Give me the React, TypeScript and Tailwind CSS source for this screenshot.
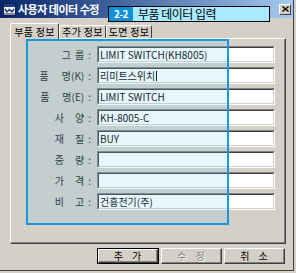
import React from 'react';

const KR = '"Noto Sans CJK KR", "Noto Sans", sans-serif';

type Row = { a: string; b: string; gap: number; value: string; caret?: boolean };

const rows: Row[] = [
  { a: '그', b: '룹', gap: 4, value: 'LIMIT SWITCH(KH8005)' },
  { a: '품', b: '명(K)', gap: 13, value: '리미트스위치', caret: true },
  { a: '품', b: '명(E)', gap: 13, value: 'LIMIT SWITCH' },
  { a: '사', b: '양', gap: 11, value: 'KH-8005-C' },
  { a: '재', b: '질', gap: 11, value: 'BUY' },
  { a: '중', b: '량', gap: 11, value: '' },
  { a: '가', b: '격', gap: 11, value: '' },
  { a: '비', b: '고', gap: 11, value: '건흥전기(주)' },
];

function TitleIcon() {
  return (
    <svg width="13" height="13" viewBox="0 0 13 13">
      <rect x="0.5" y="0.5" width="12" height="12" fill="#e8f0f8" stroke="#102050" />
      <rect x="1" y="1" width="11" height="3" fill="#1c3c80" />
      <path d="M2 6 L4 9 L6.5 6.5 L9 9 L11 6" fill="none" stroke="#203060" strokeWidth="1.4" />
      <rect x="1" y="10" width="11" height="2" fill="#8090a8" />
    </svg>
  );
}

function Field({ value, caret }: { value: string; caret?: boolean }) {
  return (
    <div className="w-[178px] h-[17px] border-t border-l border-t-[#808080] border-l-[#808080] border-b border-r border-b-white border-r-white">
      <div className="h-full border-t border-l border-t-[#404040] border-l-[#404040] border-b border-r border-b-[#d4d0c8] border-r-[#d4d0c8] bg-white flex items-center pl-[1px] text-[10px] text-black leading-none">
        {value}
        {caret && <span className="ml-[1px] w-px h-[10px] bg-black" />}
      </div>
    </div>
  );
}

function Btn({ a, b, primary, disabled }: { a: string; b: string; primary?: boolean; disabled?: boolean }) {
  return (
    <div className={primary ? 'w-[62px] h-[16px] border border-black' : 'w-[61px] h-[16px]'}>
      <div className="h-full border-t border-l border-t-white border-l-white border-b border-r border-b-[#404040] border-r-[#404040]">
        <div className="h-full border-b border-r border-b-[#808080] border-r-[#808080] flex items-center justify-center gap-[9px] text-[10px] leading-none">
          <span className={disabled ? 'text-[#808080] [text-shadow:1px_1px_0_#fff]' : 'text-black'}>{a}</span>
          <span className={disabled ? 'text-[#808080] [text-shadow:1px_1px_0_#fff]' : 'text-black'}>{b}</span>
        </div>
      </div>
    </div>
  );
}

export default function App() {
  return (
    <div className="relative w-[296px] h-[273px] overflow-hidden bg-[#d4d0c8]" style={{ fontFamily: KR }}>
      <div className="w-[294px] h-[271px] border-r border-b border-r-[#404040] border-b-[#404040] flex flex-col">
        {/* Title bar */}
        <div className="h-[18px] flex items-center bg-gradient-to-r from-[#0a246a] to-[#a6caf0] pl-[3px] pr-[2px]">
          <TitleIcon />
          <span className="ml-[2px] text-white font-bold text-[11px] leading-none tracking-[-0.5px]">사용자 데이터 수정</span>
          <div className="ml-auto w-[12px] h-[11px] bg-[#d4d0c8] border-t border-l border-t-white border-l-white border-b border-r border-b-[#404040] border-r-[#404040] flex items-center justify-center">
            <svg width="7" height="6" viewBox="0 0 7 6">
              <path d="M0.5 0.5 L6.5 5.5 M6.5 0.5 L0.5 5.5" stroke="#000" strokeWidth="1.4" />
            </svg>
          </div>
        </div>

        {/* Tabs */}
        <div className="mt-[4px] ml-[10px] flex items-end h-[16px] text-[10px] leading-none text-black">
          <div className="relative z-10 w-[49px] h-[16px] -mb-[1px] bg-[#d4d0c8] border-t border-l border-t-white border-l-white border-r border-r-[#404040] rounded-t-[2px] flex items-center justify-center tracking-[0.3px]">
            부품 정보
          </div>
          <div className="w-[47px] h-[13px] border-t border-l border-t-white border-l-white border-r border-r-[#404040] rounded-t-[2px] flex items-center justify-center tracking-[0.3px]">
            추가 정보
          </div>
          <div className="w-[46px] h-[13px] border-t border-l border-t-white border-l-white border-r border-r-[#404040] rounded-t-[2px] flex items-center justify-center tracking-[0.3px]">
            도면 정보
          </div>
        </div>

        {/* Tab panel */}
        <div className="ml-[10px] w-[276px] h-[206px] border-t border-l border-t-white border-l-white border-b border-r border-b-[#404040] border-r-[#404040]">
          <div className="h-full border-b border-r border-b-[#808080] border-r-[#808080] pt-[7px] flex flex-col gap-[4px]">
            {rows.map((r, i) => (
              <div key={i} className="flex items-center h-[17px]">
                <div className="w-[80px] flex justify-end items-center text-[10px] leading-none text-[#202020]">
                  <span>{r.a}</span>
                  <span style={{ marginLeft: r.gap }}>{r.b}</span>
                  <span className="ml-[4px]">:</span>
                </div>
                <div className="ml-[6px]">
                  <Field value={r.value} caret={r.caret} />
                </div>
              </div>
            ))}
          </div>
        </div>

        {/* Buttons */}
        <div className="mt-[4px] ml-[97px] flex gap-[2px]">
          <Btn a="추" b="가" primary />
          <Btn a="수" b="정" disabled />
          <Btn a="취" b="소" />
        </div>
      </div>

      {/* Highlight overlay */}
      <div className="absolute left-[26px] top-[39px] w-[203px] h-[186px] border-2 border-[#1898e0] bg-[rgba(120,200,240,0.18)] pointer-events-none" />

      {/* Badge */}
      <div className="absolute left-[108px] top-[6px] w-[162px] h-[16px] border border-black bg-[#a8eaff] flex items-center">
        <div className="w-[24px] h-full bg-[#1090d8] flex items-center justify-center text-white font-bold text-[10px] leading-none tracking-[-0.5px]">
          2-2
        </div>
        <span className="ml-[5px] text-black text-[12px] leading-none tracking-[-0.5px]">부품 데이터 입력</span>
      </div>
    </div>
  );
}
